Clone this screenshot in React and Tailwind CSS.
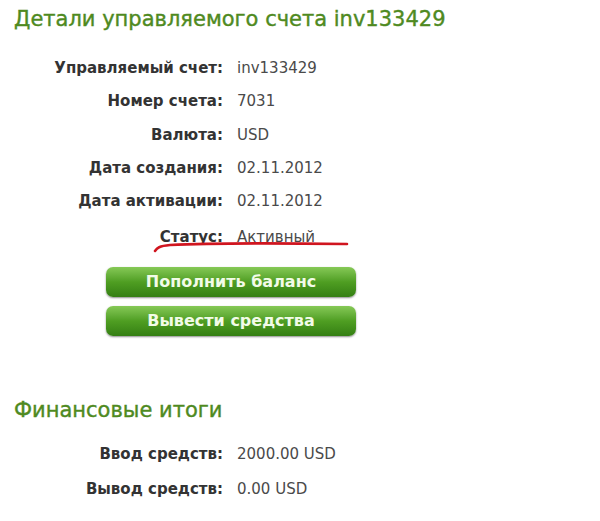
export default function App() {
  const rows = [
    ["Управляемый счет:", "inv133429"],
    ["Номер счета:", "7031"],
    ["Валюта:", "USD"],
    ["Дата создания:", "02.11.2012"],
    ["Дата активации:", "02.11.2012"],
  ];
  const font = { fontFamily: '"DejaVu Sans", Verdana, sans-serif' };
  return (
    <div className="w-[600px] h-[521px] bg-white overflow-hidden relative" style={font}>
      <h1 className="pl-[14px] pt-[7px] text-[21px] leading-[25px] text-[#4f8a1f] [-webkit-text-stroke:0.4px_#4f8a1f]">Детали управляемого счета inv133429</h1>
      <div className="mt-[26px] flex flex-col gap-[13.4px]">
        {rows.map(([l, v]) => (
          <div key={l} className="flex items-center h-[20px]">
            <div className="w-[223px] text-right font-bold text-[15px] text-[#333]">{l}</div>
            <div className="pl-[14px] text-[15px] text-[#4a4a4a]">{v}</div>
          </div>
        ))}
        <div className="flex items-center h-[20px] mt-[2px]">
          <div className="w-[223px] text-right font-bold text-[15px] text-[#333]">Статус:</div>
          <div className="pl-[14px] text-[15px] text-[#4a4a4a]">Активный</div>
        </div>
      </div>
      <svg className="absolute left-[150px] top-[232px]" width="210" height="25" viewBox="0 0 210 25">
        <path d="M5 19 C 7 16, 9 14, 20 13 C 60 11, 120 11, 197 12" stroke="#d0151f" strokeWidth="2.6" fill="none" strokeLinecap="round" />
      </svg>
      <div className="mt-[20px] ml-[106px] flex flex-col gap-[9px] w-[250px]">
        {["Пополнить баланс", "Вывести средства"].map((t) => (
          <div key={t} className="h-[30px] rounded-[7px] bg-gradient-to-b from-[#86c956] via-[#4f9e22] to-[#347f13] text-[#f2fbe8] text-[16px] font-bold flex items-center justify-center shadow-[0_1px_2px_rgba(0,0,0,0.45)]">{t}</div>
        ))}
      </div>
      <h2 className="pl-[14px] mt-[62px] text-[21px] leading-[25px] text-[#4f8a1f] [-webkit-text-stroke:0.4px_#4f8a1f]">Финансовые итоги</h2>
      <div className="mt-[21px] flex flex-col gap-[15px]">
        {[["Ввод средств:", "2000.00 USD"], ["Вывод средств:", "0.00 USD"]].map(([l, v]) => (
          <div key={l} className="flex items-center h-[20px]">
            <div className="w-[223px] text-right font-bold text-[15px] text-[#333]">{l}</div>
            <div className="pl-[14px] text-[15px] text-[#4a4a4a]">{v}</div>
          </div>
        ))}
      </div>
    </div>
  );
}
